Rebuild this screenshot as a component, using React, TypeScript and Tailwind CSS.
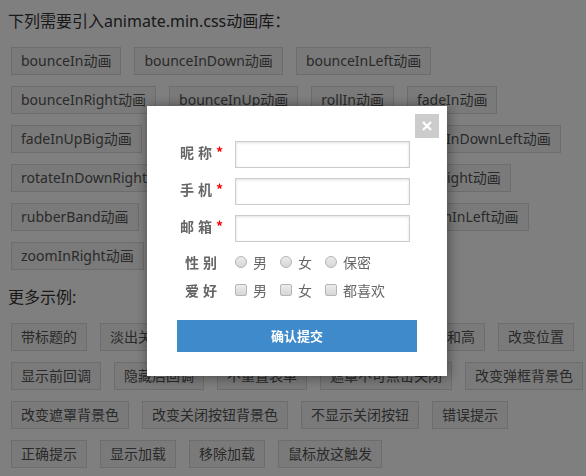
const animations = [
  "bounceIn",
  "bounceInDown",
  "bounceInLeft",
  "bounceInRight",
  "bounceInUp",
  "rollIn",
  "fadeIn",
  "fadeInUpBig",
  "fadeInRight",
  "flipInX",
  "rotateInDownLeft",
  "rotateInDownRight",
  "rotateInUpLeft",
  "rotateInUpRight",
  "rubberBand",
  "lightSpeedIn",
  "wobble",
  "zoomInLeft",
  "zoomInRight",
];

const examples = [
  "带标题的",
  "淡出关闭",
  "自动关闭",
  "三秒后关闭",
  "自定义宽和高",
  "改变位置",
  "显示前回调",
  "隐藏后回调",
  "不重置表单",
  "遮罩不可点击关闭",
  "改变弹框背景色",
  "改变遮罩背景色",
  "改变关闭按钮背景色",
  "不显示关闭按钮",
  "错误提示",
  "正确提示",
  "显示加载",
  "移除加载",
  "鼠标放这触发",
];

const Btn = ({ label }: { label: string }) => (
  <button className="h-[28px] px-[9px] border border-[#dadada] bg-[#f4f4f4] text-[14px] leading-[26px] text-[#555]">
    {label}
  </button>
);

const Radio = () => (
  <span className="inline-block w-[12px] h-[12px] rounded-full border border-[#b5b5b5] bg-gradient-to-b from-[#ececec] to-[#d6d6d6]" />
);

const Check = () => (
  <span className="inline-block w-[12px] h-[12px] rounded-[2px] border border-[#b5b5b5] bg-gradient-to-b from-[#ececec] to-[#d6d6d6]" />
);

const Field = ({ label }: { label: string }) => (
  <div className="flex items-center h-[27px]">
    <div className="w-[78px] flex justify-end items-center pr-[2px] text-[14px] font-bold text-[#666]">
      <span className="tracking-[4px] -mt-[5px]">{label}</span>
      <span className="text-[#f00] -mt-[5px]">*</span>
    </div>
    <input className="ml-[10px] w-[175px] h-[27px] border border-[#ccc] shadow-[inset_0_1px_3px_rgba(0,0,0,0.12)] outline-none" />
  </div>
);

const ChoiceRow = ({
  label,
  items,
  radio,
}: {
  label: string;
  items: string[];
  radio?: boolean;
}) => (
  <div className="flex items-center h-[20px]">
    <div className="w-[78px] flex justify-end pr-[4px] text-[14px] font-bold text-[#666]">
      <span className="tracking-[4px]">{label}</span>
    </div>
    <div className="ml-[10px] flex items-center gap-[13px] text-[14px] text-[#666]">
      {items.map((it) => (
        <label key={it} className="flex items-center gap-[6px]">
          {radio ? <Radio /> : <Check />}
          <span>{it}</span>
        </label>
      ))}
    </div>
  </div>
);

export default function App() {
  return (
    <div className="relative w-[586px] h-[476px] overflow-hidden bg-white font-['Noto_Sans','Noto_Sans_CJK_SC',sans-serif] text-[#333]">
      <div className="pl-2 pt-[9px]">
        <h2 className="text-[16px] leading-[24px]">下列需要引入animate.min.css动画库：</h2>
        <div className="mt-[14px] pl-[3px] flex flex-wrap gap-x-[13px] gap-y-[11px]">
          {animations.map((a) => (
            <Btn key={a} label={`${a}动画`} />
          ))}
        </div>
        <h2 className="mt-[15px] text-[16px] leading-[24px]">更多示例:</h2>
        <div className="mt-[14px] pl-[3px] flex flex-wrap gap-x-[13px] gap-y-[11px]">
          {examples.map((e) => (
            <Btn key={e} label={e} />
          ))}
        </div>
      </div>

      {/* overlay + dialog */}
      <div className="fixed inset-0 bg-black/50" />
      <div className="fixed left-[147px] top-[106px] w-[300px] h-[270px] bg-white shadow-[1px_1px_12px_rgba(0,0,0,0.45)] font-['Noto_Sans_CJK_SC',sans-serif]">
        <button className="absolute right-[8px] top-[8px] w-[24px] h-[24px] bg-[#ccc] flex items-center justify-center">
          <svg width="10" height="10" viewBox="0 0 10 10">
            <path d="M1 1L9 9M9 1L1 9" stroke="#fff" strokeWidth="2.2" />
          </svg>
        </button>
        <div className="pt-[35px] flex flex-col gap-[10px]">
          <Field label="昵称" />
          <Field label="手机" />
          <Field label="邮箱" />
        </div>
        <div className="mt-[10px] flex flex-col gap-[8px]">
          <ChoiceRow label="性别" items={["男", "女", "保密"]} radio />
          <ChoiceRow label="爱好" items={["男", "女", "都喜欢"]} />
        </div>
        <div className="mt-[20px] px-[30px]">
          <button className="w-full h-[32px] bg-[#3e8acb] text-white text-[13px] font-bold">
            确认提交
          </button>
        </div>
      </div>
    </div>
  );
}
